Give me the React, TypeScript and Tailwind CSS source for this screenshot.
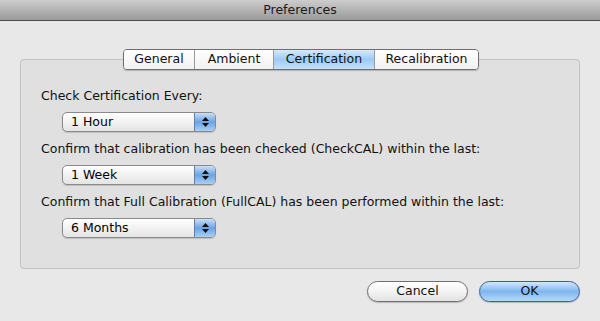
import React from "react"

const font = { fontFamily: '"Lucida Grande", "DejaVu Sans", sans-serif' }

const tabs = ["General", "Ambient", "Certification", "Recalibration"]

function Stepper() {
  return (
    <div className="flex h-full w-[21px] flex-col items-center justify-center gap-[2px] rounded-r-[4px] border-l border-[#5a7fb0] bg-gradient-to-b from-[#c9e0f7] via-[#6aa3e3] to-[#a9d0f5]">
      <svg width="7" height="4" viewBox="0 0 7 4">
        <path d="M3.5 0 L7 4 L0 4 Z" fill="#111" />
      </svg>
      <svg width="7" height="4" viewBox="0 0 7 4">
        <path d="M0 0 L7 0 L3.5 4 Z" fill="#111" />
      </svg>
    </div>
  )
}

function Popup({ value }: { value: string }) {
  return (
    <div className="ml-[21px] flex h-[20px] w-[154px] items-stretch rounded-[5px] border border-[#8a8a8a] bg-gradient-to-b from-white via-[#f2f2f2] to-[#e4e4e4] shadow-[0_1px_1px_rgba(0,0,0,0.15)]">
      <div className="flex-1 pl-[8px] text-[12.5px] leading-[18px] text-black">{value}</div>
      <Stepper />
    </div>
  )
}

function Field({ label, value }: { label: string; value: string }) {
  return (
    <div className="flex flex-col gap-[8px]">
      <div className="text-[12.5px] leading-[16px] text-[#111]">{label}</div>
      <Popup value={value} />
    </div>
  )
}

export default function App() {
  return (
    <div className="flex h-[321px] w-[600px] flex-col bg-[#e8e8e8]" style={font}>
      {/* Title bar */}
      <div className="flex h-[21px] items-center justify-center border-b border-[#4f4f4f] bg-gradient-to-b from-[#cdcdcd] to-[#9a9a9a] text-[12.5px] text-[#1a1a1a]">
        Preferences
      </div>

      {/* Tab view */}
      <div className="relative mx-[20px] mt-[38px] h-[210px] rounded-[4px] border border-[#c2c2c2] bg-[#e0e0e0]">
        <div className="absolute left-[102px] top-[-11px] flex h-[21px] overflow-hidden rounded-[4px] border border-[#6e6e6e] shadow-[0_1px_1px_rgba(0,0,0,0.2)]">
          {tabs.map((t, i) => (
            <div
              key={t}
              className={
                (t === "Certification"
                  ? "w-[101px] bg-gradient-to-b from-[#d6eafc] via-[#9ccaf4] to-[#c6e2fb] "
                  : "bg-gradient-to-b from-white to-[#f1f1f1] ") +
                (i === 0 ? "w-[70px] " : i === 1 ? "w-[79px] " : i === 3 ? "w-[104px] " : "") +
                (i > 0 ? "border-l border-[#9a9a9a] " : "") +
                "flex items-center justify-center text-[12.5px] text-[#111]"
              }
            >
              {t}
            </div>
          ))}
        </div>

        <div className="flex flex-col gap-[9px] pl-[20px] pt-[28px]">
          <Field label="Check Certification Every:" value="1 Hour" />
          <Field label="Confirm that calibration has been checked (CheckCAL) within the last:" value="1 Week" />
          <Field label="Confirm that Full Calibration (FullCAL) has been performed within the last:" value="6 Months" />
        </div>
      </div>

      {/* Buttons */}
      <div className="mr-[20px] mt-[12px] flex justify-end gap-[11px]">
        <button className="h-[21px] w-[101px] rounded-full border border-[#6f6f6f] bg-gradient-to-b from-white via-[#f3f3f3] to-[#e2e2e2] text-[12.5px] text-[#111] shadow-[0_1px_1px_rgba(0,0,0,0.2)]">
          Cancel
        </button>
        <button className="h-[21px] w-[101px] rounded-full border border-[#3b5e9a] bg-gradient-to-b from-[#d2e7fb] via-[#7fb6ee] to-[#b5dafa] text-[12.5px] text-[#111] shadow-[0_1px_1px_rgba(0,0,0,0.2)]">
          OK
        </button>
      </div>
    </div>
  )
}
